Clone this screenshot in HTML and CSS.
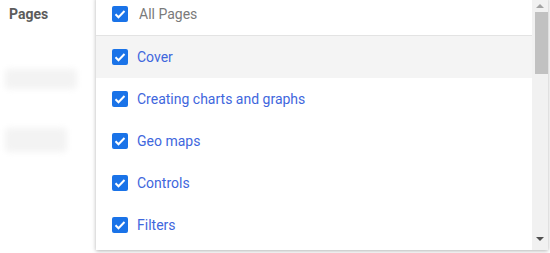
FILE: index.html
```html
<!DOCTYPE html>
<html lang="en">
<head>
  <meta charset="UTF-8">
  <title>Pages filter</title>
  <link rel="stylesheet" href="styles.css">
</head>
<body>
  <div id="page">
    <div class="side">
      <div class="label">Pages</div>
      <div class="ghost wide"></div>
      <div class="ghost narrow"></div>
    </div>
  </div>

  <div id="menu">
    <div class="list">
      <div class="row all">
        <span class="box"><svg viewBox="0 0 16 16"><path d="M3.5 8.2l3 3 6-6.2" fill="none" stroke="#fff" stroke-width="2"/></svg></span>
        <span class="name">All Pages</span>
      </div>
      <div class="row hover">
        <span class="box"><svg viewBox="0 0 16 16"><path d="M3.5 8.2l3 3 6-6.2" fill="none" stroke="#fff" stroke-width="2"/></svg></span>
        <span class="name">Cover</span>
      </div>
      <div class="row">
        <span class="box"><svg viewBox="0 0 16 16"><path d="M3.5 8.2l3 3 6-6.2" fill="none" stroke="#fff" stroke-width="2"/></svg></span>
        <span class="name">Creating charts and graphs</span>
      </div>
      <div class="row">
        <span class="box"><svg viewBox="0 0 16 16"><path d="M3.5 8.2l3 3 6-6.2" fill="none" stroke="#fff" stroke-width="2"/></svg></span>
        <span class="name">Geo maps</span>
      </div>
      <div class="row">
        <span class="box"><svg viewBox="0 0 16 16"><path d="M3.5 8.2l3 3 6-6.2" fill="none" stroke="#fff" stroke-width="2"/></svg></span>
        <span class="name">Controls</span>
      </div>
      <div class="row">
        <span class="box"><svg viewBox="0 0 16 16"><path d="M3.5 8.2l3 3 6-6.2" fill="none" stroke="#fff" stroke-width="2"/></svg></span>
        <span class="name">Filters</span>
      </div>
    </div>
    <div class="scroll">
      <span class="arrow up"></span>
      <span class="thumb"></span>
      <span class="fill"></span>
      <span class="arrow down"></span>
    </div>
  </div>
</body>
</html>
```

FILE: styles.css
```css
body {
  margin: 0;
  font-family: Roboto, "Liberation Sans", sans-serif;
  background-color: #fff;
  overflow: hidden;
}

#page {
  display: flex;
  height: 253px;
}

.side {
  width: 96px;
  padding: 5px 0 0 5px;
  box-sizing: border-box;
}

.side .label {
  font-size: 14px;
  font-weight: 700;
  color: #5c5c5c;
  padding-left: 4px;
  line-height: 18px;
}

.ghost {
  background-color: #f3f3f3;
  filter: blur(3px);
  border-radius: 4px;
}

.ghost.wide {
  width: 72px;
  height: 20px;
  margin-top: 46px;
}

.ghost.narrow {
  width: 62px;
  height: 24px;
  margin-top: 39px;
}

/* dropdown lies over the page */
#menu {
  position: absolute;
  left: 96px;
  top: -3px;
  width: 452px;
  height: 253px;
  background-color: #fff;
  box-shadow: 0 1px 4px rgba(0, 0, 0, 0.3);
  display: flex;
  overflow: hidden;
}

.list {
  flex: 1;
}

.row {
  height: 42px;
  display: flex;
  align-items: center;
  padding-left: 16px;
  font-size: 14px;
  color: #3f67dd;
}

.row.all {
  height: 31px;
  padding-top: 1px;
  padding-bottom: 6px;
  border-bottom: 1px solid #e3e3e3;
  color: #7a7a7a;
}

.row.all .name {
  margin-left: 2px;
}

.row.hover {
  background-color: #f4f4f4;
}

.box {
  width: 16px;
  height: 16px;
  border-radius: 2px;
  background-color: #1a73e8;
  margin-right: 9px;
  display: flex;
}

.box svg {
  width: 16px;
  height: 16px;
}

.scroll {
  width: 16px;
  background-color: #f1f1f1;
  display: flex;
  flex-direction: column;
  align-items: center;
  padding-top: 3px;
  box-sizing: border-box;
}

.arrow {
  width: 0;
  height: 0;
  border-left: 4px solid transparent;
  border-right: 4px solid transparent;
  margin: 4px 0;
}

.arrow.up {
  border-bottom: 4px solid #a3a3a3;
}

.arrow.down {
  border-top: 4px solid #505050;
  margin-bottom: 9px;
}

.thumb {
  width: 13px;
  height: 62px;
  margin-left: 3px;
  background-color: #c1c1c1;
}

.fill {
  flex: 1;
}
```
